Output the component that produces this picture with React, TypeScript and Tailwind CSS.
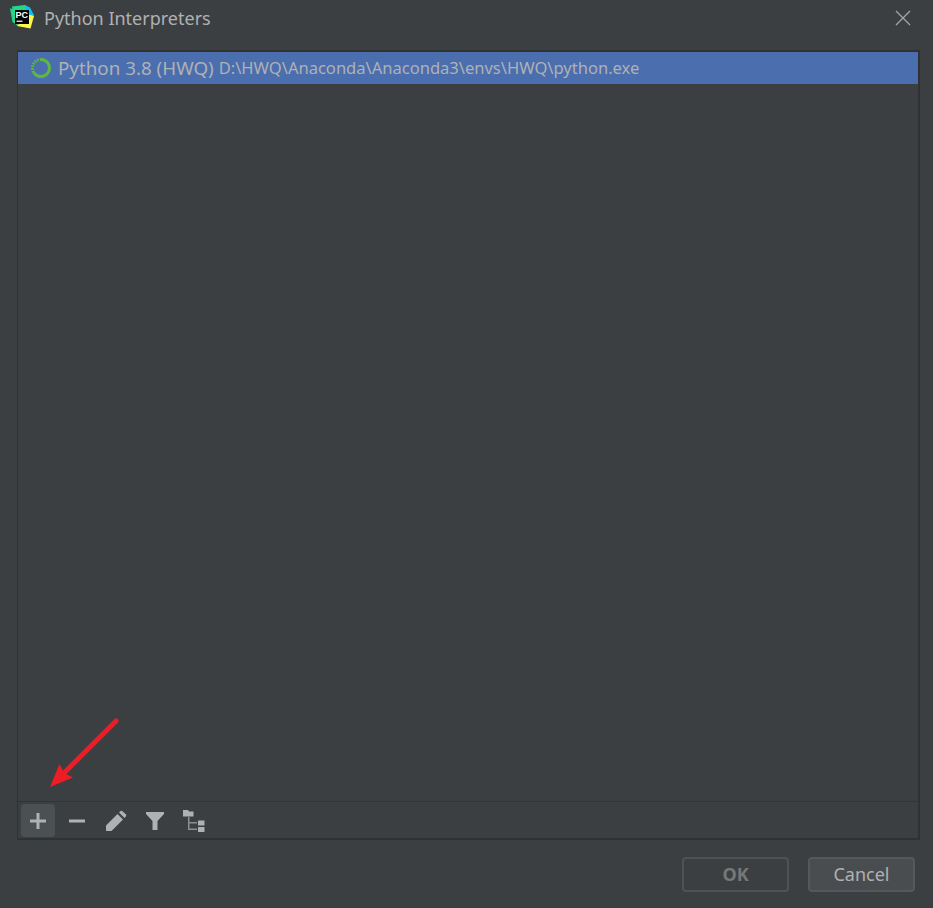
function PyCharmLogo() {
  return (
    <svg className="mt-[5px] self-start" width="24" height="24" viewBox="0 0 24 24">
      <path d="M2 1.5 L15 0 L20 3 L20 10 L3 10 Z" fill="#21d789" />
      <path d="M15 0.5 L20 2.5 L24 10 L22 14 L17 12 Z" fill="#07c3f2" />
      <path d="M0 3 L2.5 17 L8 21 L9 8 Z" fill="#21d789" />
      <path d="M7 21 L20.5 23.5 L24 11 L17 9 Z" fill="#fcf84a" />
      <rect x="5" y="5" width="14" height="14" fill="#000000" />
      <text x="5.6" y="13" fill="#ffffff" fontSize="9" fontWeight="700" fontFamily="'Liberation Sans', sans-serif">
        PC
      </text>
      <rect x="6.5" y="15.6" width="6" height="1.2" fill="#ffffff" />
    </svg>
  );
}

function SpinnerIcon() {
  return (
    <svg width="22" height="22" viewBox="0 0 22 22" fill="none">
      <path d="M11 2.5 A8.5 8.5 0 1 1 3.6 15.2" stroke="#5cb83f" strokeWidth="3" />
      <path d="M3.6 15.2 A8.5 8.5 0 0 1 11 2.5" stroke="#5cb83f" strokeWidth="3" strokeDasharray="1.6 1.1" />
    </svg>
  );
}

function ToolbarIcon({ active, children }: { active?: boolean; children: React.ReactNode }) {
  return (
    <div className={`flex h-[33px] w-[34px] items-center justify-center rounded-[4px] ${active ? "bg-[#4b5052]" : ""}`}>
      {children}
    </div>
  );
}

function RedArrow() {
  return (
    <svg className="absolute left-[46px] top-[714px]" width="78" height="78" viewBox="0 0 78 78" fill="none">
      <path d="M70 7 L16 61" stroke="#ee1c25" strokeWidth="5" strokeLinecap="round" />
      <path d="M4 73 L13.5 50 L18 59 L27 63.5 Z" fill="#ee1c25" />
    </svg>
  );
}

export default function App() {
  return (
    <div
      className="relative flex h-[908px] w-[933px] flex-col bg-[#3c3f41] text-[#afb1b3]"
      style={{ fontFamily: "'Noto Sans', 'Liberation Sans', sans-serif" }}
    >
      <div className="flex h-[36px] items-center pl-[10px] pr-[22px]">
        <PyCharmLogo />
        <span className="ml-[10px] text-[18px]">Python Interpreters</span>
        <svg className="ml-auto" width="16" height="16" viewBox="0 0 16 16" stroke="#a4a6a8" strokeWidth="1.3">
          <path d="M1 1 L15 15 M15 1 L1 15" />
        </svg>
      </div>

      <div className="ml-[17px] mt-[14px] flex h-[790px] w-[903px] flex-col border-t-2 border-r-2 border-b-2 border-l border-[#2f3133]">
        <div className="flex h-[32px] items-center bg-[#4b6eaf] pl-[12px]">
          <SpinnerIcon />
          <span className="ml-[6px] text-[18.8px]">Python 3.8 (HWQ)</span>
          <span className="ml-[5px] mt-[1px] text-[16.55px]">D:\HWQ\Anaconda\Anaconda3\envs\HWQ\python.exe</span>
        </div>
        <div className="flex-1" />
        <div className="flex h-[37px] items-center gap-[5px] border-t border-[#323436] pl-[3px] pt-[1px]">
          <ToolbarIcon active>
            <svg width="16" height="16" viewBox="0 0 16 16" fill="#afb1b3">
              <path d="M6.5 0 H9.5 V6.5 H16 V9.5 H9.5 V16 H6.5 V9.5 H0 V6.5 H6.5 Z" />
            </svg>
          </ToolbarIcon>
          <ToolbarIcon>
            <svg width="16" height="16" viewBox="0 0 16 16" fill="#afb1b3">
              <rect x="0" y="6.5" width="16" height="3" />
            </svg>
          </ToolbarIcon>
          <ToolbarIcon>
            <svg width="22" height="22" viewBox="0 0 22 22" fill="#afb1b3">
              <path d="M1 21 V15.5 L12.5 4 L18 9.5 L6.5 21 Z" />
              <path d="M14 2.5 L15.5 1 Q16.5 0.5 17.5 1.2 L21 4.5 Q21.5 5.5 20.8 6.5 L19.5 8 Z" />
            </svg>
          </ToolbarIcon>
          <ToolbarIcon>
            <svg width="20" height="20" viewBox="0 0 20 20" fill="#afb1b3">
              <path d="M1 1 H19 V3 L12.5 10 V19 H7.5 V10 L1 3 Z" />
            </svg>
          </ToolbarIcon>
          <ToolbarIcon>
            <svg width="24" height="24" viewBox="0 0 24 24" fill="#afb1b3">
              <path d="M1 1 H6 L7 2.5 H11.5 V7.5 H1 Z" />
              <path d="M6 8 H7.5 V13 H15 V14.5 H7.5 V19.5 H15 V21 H6 Z" fill="#8c8e90" />
              <rect x="16" y="11.5" width="6.5" height="5" rx="0.5" />
              <rect x="16" y="18" width="6.5" height="5" rx="0.5" />
            </svg>
          </ToolbarIcon>
        </div>
      </div>

      <div className="mt-[17px] flex justify-end gap-[19px] pr-[18px]">
        <button className="h-[35px] w-[107px] rounded-[4px] border-2 border-[#4f5254] text-[18px] font-bold text-[#777777]">
          OK
        </button>
        <button className="h-[35px] w-[107px] rounded-[4px] border-2 border-[#55585a] bg-[#4a4d4f] text-[18px] text-[#afb1b3]">
          Cancel
        </button>
      </div>

      <RedArrow />
    </div>
  );
}
